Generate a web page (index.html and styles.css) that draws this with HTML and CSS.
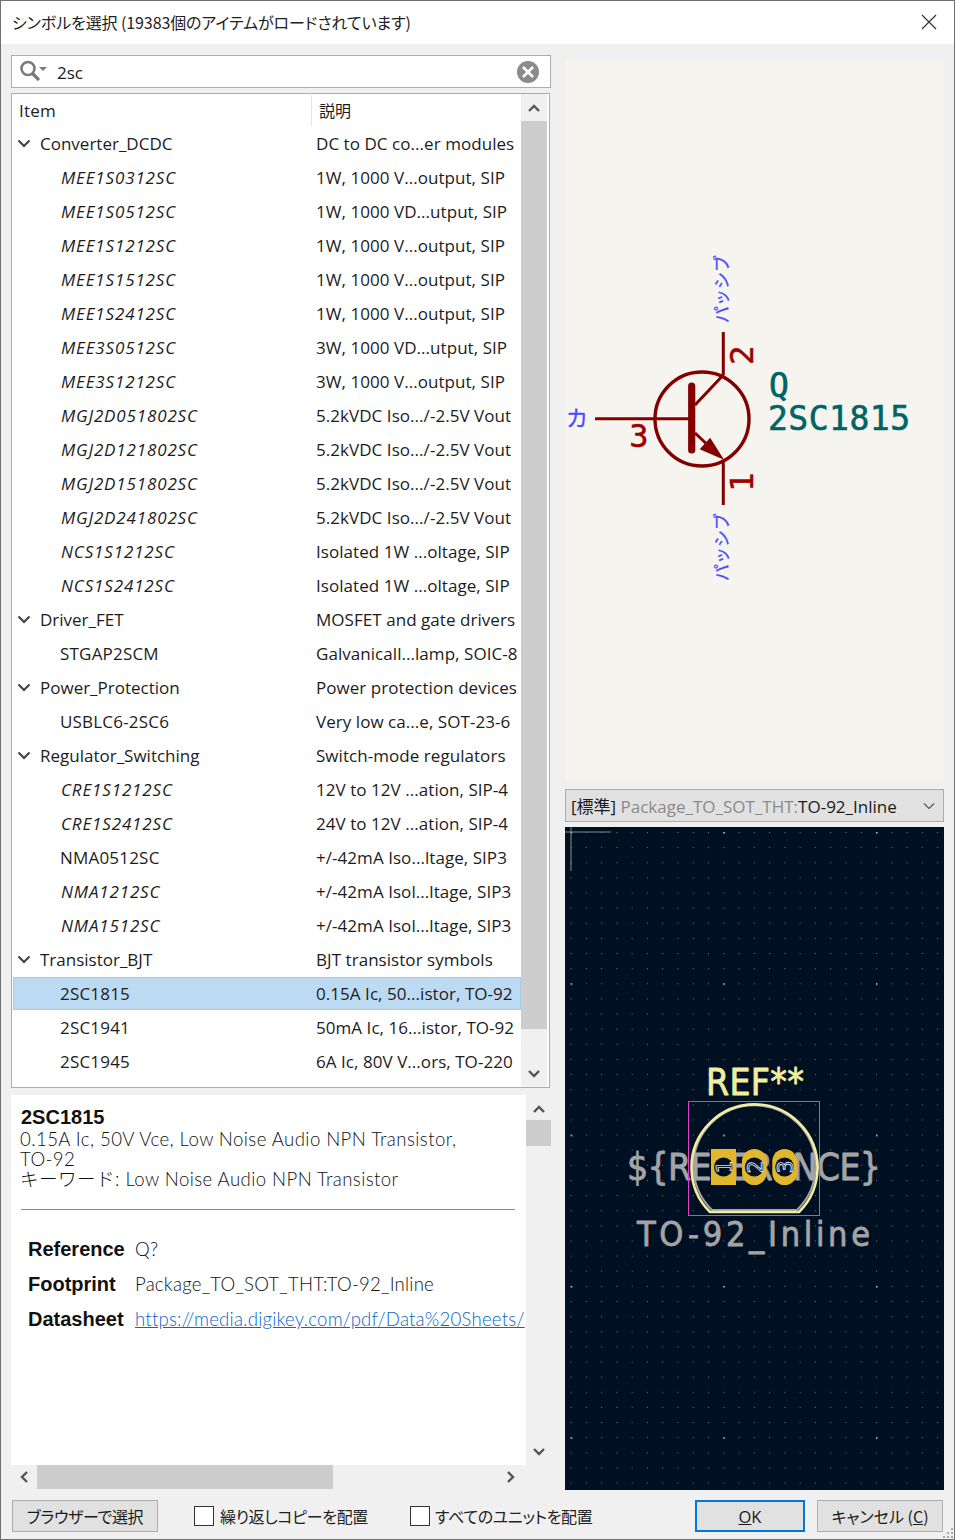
FILE: index.html
```html
<!DOCTYPE html>
<html lang="ja">
<head>
<meta charset="utf-8">
<title>シンボルを選択</title>
<link rel="stylesheet" href="styles.css">
</head>
<body>
<div class="window">
  <header class="titlebar">
    <span class="title">シンボルを選択 (19383個のアイテムがロードされています)</span>
    <svg class="close" width="16" height="16" viewBox="0 0 16 16"><path d="M1 1L15 15M15 1L1 15" stroke="#333" stroke-width="1.2" fill="none"/></svg>
  </header>
  <main class="main">
    <section class="left">
      <div class="search">
        <svg class="search-icon" width="30" height="24" viewBox="0 0 30 24"><circle cx="9" cy="9.5" r="6.5" fill="none" stroke="#7a7a7a" stroke-width="2.6"/><path d="M13.5 14.5L20 21" stroke="#7a7a7a" stroke-width="3.2"/><path d="M20 8h8l-4 4z" fill="#7a7a7a"/></svg>
        <span class="search-text">2sc</span>
        <svg class="clear" width="24" height="24" viewBox="0 0 24 24"><circle cx="12" cy="12" r="11" fill="#8b8b8b"/><path d="M7 7L17 17M17 7L7 17" stroke="#fff" stroke-width="2.6"/></svg>
      </div>
      <div class="tree">
        <div class="tree-body">
          <div class="row head"><span class="c1 headcell">Item</span><span class="c2 headcell">説明</span></div>
          <div class="row group"><svg class="chev" width="14" height="9" viewBox="0 0 14 9"><path d="M1.5 1.5L7 7l5.5-5.5" fill="none" stroke="#444" stroke-width="2.2"/></svg><span class="c1">Converter_DCDC</span><span class="c2">DC to DC co...er modules</span></div>
          <div class="row"><span class="c1 em">MEE1S0312SC</span><span class="c2">1W, 1000 V...output, SIP</span></div>
          <div class="row"><span class="c1 em">MEE1S0512SC</span><span class="c2">1W, 1000 VD...utput, SIP</span></div>
          <div class="row"><span class="c1 em">MEE1S1212SC</span><span class="c2">1W, 1000 V...output, SIP</span></div>
          <div class="row"><span class="c1 em">MEE1S1512SC</span><span class="c2">1W, 1000 V...output, SIP</span></div>
          <div class="row"><span class="c1 em">MEE1S2412SC</span><span class="c2">1W, 1000 V...output, SIP</span></div>
          <div class="row"><span class="c1 em">MEE3S0512SC</span><span class="c2">3W, 1000 VD...utput, SIP</span></div>
          <div class="row"><span class="c1 em">MEE3S1212SC</span><span class="c2">3W, 1000 V...output, SIP</span></div>
          <div class="row"><span class="c1 em">MGJ2D051802SC</span><span class="c2">5.2kVDC Iso.../-2.5V Vout</span></div>
          <div class="row"><span class="c1 em">MGJ2D121802SC</span><span class="c2">5.2kVDC Iso.../-2.5V Vout</span></div>
          <div class="row"><span class="c1 em">MGJ2D151802SC</span><span class="c2">5.2kVDC Iso.../-2.5V Vout</span></div>
          <div class="row"><span class="c1 em">MGJ2D241802SC</span><span class="c2">5.2kVDC Iso.../-2.5V Vout</span></div>
          <div class="row"><span class="c1 em">NCS1S1212SC</span><span class="c2">Isolated 1W ...oltage, SIP</span></div>
          <div class="row"><span class="c1 em">NCS1S2412SC</span><span class="c2">Isolated 1W ...oltage, SIP</span></div>
          <div class="row group"><svg class="chev" width="14" height="9" viewBox="0 0 14 9"><path d="M1.5 1.5L7 7l5.5-5.5" fill="none" stroke="#444" stroke-width="2.2"/></svg><span class="c1">Driver_FET</span><span class="c2">MOSFET and gate drivers</span></div>
          <div class="row"><span class="c1">STGAP2SCM</span><span class="c2">Galvanicall...lamp, SOIC-8</span></div>
          <div class="row group"><svg class="chev" width="14" height="9" viewBox="0 0 14 9"><path d="M1.5 1.5L7 7l5.5-5.5" fill="none" stroke="#444" stroke-width="2.2"/></svg><span class="c1">Power_Protection</span><span class="c2">Power protection devices</span></div>
          <div class="row"><span class="c1">USBLC6-2SC6</span><span class="c2">Very low ca...e, SOT-23-6</span></div>
          <div class="row group"><svg class="chev" width="14" height="9" viewBox="0 0 14 9"><path d="M1.5 1.5L7 7l5.5-5.5" fill="none" stroke="#444" stroke-width="2.2"/></svg><span class="c1">Regulator_Switching</span><span class="c2">Switch-mode regulators</span></div>
          <div class="row"><span class="c1 em">CRE1S1212SC</span><span class="c2">12V to 12V ...ation, SIP-4</span></div>
          <div class="row"><span class="c1 em">CRE1S2412SC</span><span class="c2">24V to 12V ...ation, SIP-4</span></div>
          <div class="row"><span class="c1">NMA0512SC</span><span class="c2">+/-42mA Iso...ltage, SIP3</span></div>
          <div class="row"><span class="c1 em">NMA1212SC</span><span class="c2">+/-42mA Isol...ltage, SIP3</span></div>
          <div class="row"><span class="c1 em">NMA1512SC</span><span class="c2">+/-42mA Isol...ltage, SIP3</span></div>
          <div class="row group"><svg class="chev" width="14" height="9" viewBox="0 0 14 9"><path d="M1.5 1.5L7 7l5.5-5.5" fill="none" stroke="#444" stroke-width="2.2"/></svg><span class="c1">Transistor_BJT</span><span class="c2">BJT transistor symbols</span></div>
          <div class="row selected"><span class="c1">2SC1815</span><span class="c2">0.15A Ic, 50...istor, TO-92</span></div>
          <div class="row"><span class="c1">2SC1941</span><span class="c2">50mA Ic, 16...istor, TO-92</span></div>
          <div class="row"><span class="c1">2SC1945</span><span class="c2">6A Ic, 80V V...ors, TO-220</span></div>
        </div>
        <div class="vbar tree-bar">
          <div class="arrow"><svg width="14" height="10" viewBox="0 0 14 10"><path d="M2 8l5-5 5 5" fill="none" stroke="#555" stroke-width="2.4"/></svg></div>
          <div class="thumb tree-thumb"></div>
          <div class="spacer"></div>
          <div class="arrow"><svg width="14" height="10" viewBox="0 0 14 10"><path d="M2 2l5 5 5-5" fill="none" stroke="#555" stroke-width="2.4"/></svg></div>
        </div>
      </div>
      <div class="info">
        <div class="info-body">
          <div class="info-name">2SC1815</div>
          <div class="info-desc">0.15A Ic, 50V Vce, Low Noise Audio NPN Transistor,<br>TO-92<br>キーワード: Low Noise Audio NPN Transistor</div>
          <hr class="rule">
          <div class="fields">
            <div class="field"><span class="label">Reference</span><span class="value">Q?</span></div>
            <div class="field"><span class="label">Footprint</span><span class="value">Package_TO_SOT_THT:TO-92_Inline</span></div>
            <div class="field"><span class="label">Datasheet</span><a class="value link" href="#">https://media.digikey.com/pdf/Data%20Sheets/</a></div>
          </div>
        </div>
        <div class="vbar info-bar">
          <div class="arrow"><svg width="14" height="10" viewBox="0 0 14 10"><path d="M2 8l5-5 5 5" fill="none" stroke="#555" stroke-width="2.4"/></svg></div>
          <div class="thumb info-thumb"></div>
          <div class="spacer"></div>
          <div class="arrow"><svg width="14" height="10" viewBox="0 0 14 10"><path d="M2 2l5 5 5-5" fill="none" stroke="#555" stroke-width="2.4"/></svg></div>
        </div>
      </div>
      <div class="hbar">
        <div class="harrow"><svg width="10" height="14" viewBox="0 0 10 14"><path d="M8 2L3 7l5 5" fill="none" stroke="#555" stroke-width="2.4"/></svg></div>
        <div class="hthumb"></div>
        <div class="spacer"></div>
        <div class="harrow"><svg width="10" height="14" viewBox="0 0 10 14"><path d="M2 2l5 5-5 5" fill="none" stroke="#555" stroke-width="2.4"/></svg></div>
      </div>
    </section>
    <section class="right">
      <svg class="symbol" width="379" height="720" viewBox="565 60 379 720">
        <g fill="none" stroke="#840000">
          <circle cx="702" cy="419" r="47" stroke-width="3.4"/>
          <path d="M723.3 332V375M723.3 460V505M595 418.7H691.7" stroke-width="3"/>
          <path d="M691.7 386V450" stroke-width="7.2" stroke-linecap="round"/>
          <path d="M695 405L723.3 375M695 433L712 449" stroke-width="3"/>
          <path d="M722 458L710 439L701 449Z" fill="#840000" stroke-width="1.5"/>
        </g>
        <g class="pinnum">
          <text transform="translate(753 355) rotate(-90)" text-anchor="middle">2</text>
          <text transform="translate(753 482) rotate(-90)" text-anchor="middle">1</text>
          <text x="639" y="447" text-anchor="middle">3</text>
        </g>
        <g class="refdes">
          <text x="769" y="397">Q</text>
          <text x="768" y="430" textLength="142">2SC1815</text>
        </g>
        <g class="pintype">
          <text x="577" y="426" text-anchor="middle" class="pt-big">カ</text>
          <text transform="translate(728 289) rotate(-90)" text-anchor="middle">パッシブ</text>
          <text transform="translate(728 547) rotate(-90)" text-anchor="middle">パッシブ</text>
        </g>
      </svg>
      <div class="combo">
        <span><span class="combo-dark">[標準]</span> <span class="combo-gray">Package_TO_SOT_THT:</span><span class="combo-dark">TO-92_Inline</span></span>
        <svg width="12" height="8" viewBox="0 0 12 8"><path d="M1 1.5L6 6.5l5-5" fill="none" stroke="#555" stroke-width="1.2"/></svg>
      </div>
      <svg class="pcb" width="379" height="663" viewBox="565 827 379 663">
        <defs>
          <pattern id="minor" x="570.6" y="832" width="15.27" height="15.13" patternUnits="userSpaceOnUse"><rect width="1" height="1" fill="#6f7883"/></pattern>
          <pattern id="major" x="570.6" y="832" width="152.7" height="151.3" patternUnits="userSpaceOnUse"><rect width="1.6" height="1.6" fill="#b8b8b8"/></pattern>
        </defs>
        <rect x="565" y="827" width="379" height="663" fill="#001023"/>
        <rect x="565" y="827" width="379" height="663" fill="url(#minor)"/>
        <rect x="565" y="827" width="379" height="663" fill="url(#major)"/>
        <path d="M565 832H611M571 827V871" stroke="#8a8a8a" stroke-width="1" fill="none"/>
        <text class="pcbtext gray" x="627" y="1180" textLength="254" font-size="37">${REFERENCE}</text>
        <text class="pcbtext gray" x="637" y="1246" textLength="233" font-size="34">TO-92_Inline</text>
        <text class="pcbtext yellow" x="706" y="1095" textLength="98" font-size="37">REF**</text>
        <path d="M712 1210A61 61 0 1 1 797 1210Z" fill="none" stroke="#a5a5a5" stroke-width="2"/>
        <rect x="688.5" y="1101.5" width="131" height="114" fill="none" stroke="#e040c8" stroke-width="1"/>
        <path d="M710 1212A63 63 0 1 1 799 1212Z" fill="none" stroke="#f2eda1" stroke-width="2.6"/>
        <rect x="711" y="1149" width="25" height="36" fill="#e3b72b"/>
        <rect x="742" y="1149" width="24.7" height="36" rx="12.3" fill="#e3b72b"/>
        <rect x="772.3" y="1149" width="24.7" height="36" rx="12.3" fill="#e3b72b"/>
        <circle cx="723.5" cy="1167" r="9.5" fill="#001023"/>
        <circle cx="754.3" cy="1167" r="9.5" fill="#001023"/>
        <circle cx="784.6" cy="1167" r="9.5" fill="#001023"/>
        <g class="padnum">
          <text transform="translate(732 1167) rotate(-90)" text-anchor="middle">1</text>
          <text transform="translate(763 1167) rotate(-90)" text-anchor="middle">2</text>
          <text transform="translate(793 1167) rotate(-90)" text-anchor="middle">3</text>
        </g>
      </svg>
    </section>
  </main>
  <footer class="footer">
    <button class="btn browse">ブラウザーで選択</button>
    <label class="check first"><span class="box"></span><span>繰り返しコピーを配置</span></label>
    <label class="check second"><span class="box"></span><span>すべてのユニットを配置</span></label>
    <div class="spacer"></div>
    <button class="btn ok"><u>O</u>K</button>
    <button class="btn cancel">キャンセル (<u>C</u>)</button>
  </footer>
  <svg class="grip" width="12" height="12" viewBox="0 0 12 12"><path d="M9 1h2v2H9zM5 5h2v2H5zM9 5h2v2H9zM1 9h2v2H1zM5 9h2v2H5zM9 9h2v2H9z" fill="#a8a8a8"/></svg>
</div>
</body>
</html>
```

FILE: styles.css
```css
* { box-sizing: border-box; }
html, body { margin: 0; padding: 0; }
body { font-family: "Open Sans", "Noto Sans CJK JP", sans-serif; color: #1a1a1a; background: #f0f0f0; }

.window {
  position: relative;
  width: 955px;
  height: 1540px;
  background: #f0f0f0;
  border: 1px solid #6f6f6f;
  display: flex;
  flex-direction: column;
  overflow: hidden;
}

.titlebar {
  height: 43px;
  background: #fff;
  display: flex;
  align-items: center;
  justify-content: space-between;
  padding: 0 17px 0 11px;
  flex: none;
}
.title { font-family: "Noto Sans CJK JP", sans-serif; font-size: 16px; font-feature-settings: "palt"; letter-spacing: -0.1px; color: #222; margin-top: -2px; }
.close { margin-top: -1px; }

.main { display: flex; gap: 14px; padding: 0 10px; flex: none; height: 1445px; }
.left { width: 540px; flex: none; padding-top: 11px; display: flex; flex-direction: column; }
.right { width: 379px; flex: none; padding-top: 16px; display: flex; flex-direction: column; }

.search {
  height: 33px;
  background: #fff;
  border: 1px solid #acacac;
  display: flex;
  align-items: center;
  padding: 0 10px 0 7px;
  flex: none;
}
.search-icon { flex: none; margin-top: -1px; }
.search-text { font-size: 17px; margin-left: 8px; flex: 1; margin-top: 2px; }
.clear { flex: none; }

.tree {
  margin-top: 5px;
  height: 995px;
  width: 539px;
  background: #fff;
  border: 1px solid #acacac;
  display: flex;
  padding-left: 1px;
  flex: none;
}
.tree-body { width: 508px; flex: none; overflow: hidden; }
.row {
  position: relative;
  height: 34px;
  display: flex;
  align-items: center;
  padding-bottom: 2px;
  font-size: 17px;
  white-space: nowrap;
  color: #1c1c1c;
}
.row.head { height: 33px; padding-bottom: 0; }
.selected.row { padding-bottom: 1px; }
.c1 { width: 303px; padding-left: 47px; flex: none; overflow: hidden; letter-spacing: 0.2px; }
.c2 { flex: none; white-space: nowrap; letter-spacing: 0.05px; }
.em { font-style: italic; letter-spacing: 0.85px; padding-left: 48px; }
.group .c1 { padding-left: 13px; width: 289px; margin-left: 14px; letter-spacing: 0; }
.chev { position: absolute; left: 4px; top: 12px; }
.headcell { height: 31px; display: flex; align-items: center; }
.head .c1 { padding-left: 6px; width: 299px; border-right: 1px solid #e4e4e4; }
.head .c2 { padding-left: 7px; font-family: "Noto Sans CJK JP", sans-serif; font-size: 16px; padding-bottom: 2px; }
.selected { background: #bcdaf2; border: 1px solid #a6cbe9; height: 33px; margin-bottom: 1px; }
.selected .c1 { padding-left: 46px; width: 302px; }

.vbar { display: flex; flex-direction: column; align-items: stretch; flex: none; background: #f0f0f0; }
.tree-bar { width: 26px; }
.info-bar { width: 25px; }
.arrow { height: 27px; display: flex; align-items: center; justify-content: center; flex: none; }
.thumb { background: #cdcdcd; flex: none; }
.tree-thumb { height: 908px; }
.info-thumb { height: 26px; }
.info-bar .thumb { margin-top: -2px; }
.spacer { flex: 1; }

.info { margin-top: 7px; display: flex; height: 370px; flex: none; }
.info-body { width: 515px; flex: none; background: #fff; padding: 11px 0 0 10px; overflow: hidden; }
.info-name { font-family: "Liberation Sans", sans-serif; font-weight: 700; font-size: 20px; line-height: 22px; color: #111; }
.info-desc { font-family: "Lato", "Noto Sans CJK JP", sans-serif; font-weight: 300; font-size: 18.6px; letter-spacing: 0.42px; line-height: 20px; color: #111; margin-top: 1px; margin-left: -1px; }
.rule { width: 494px; height: 1px; border: 0; background: #8a8a8a; margin: 20px 0 0; }
.fields { padding: 22px 0 0 7px; display: flex; flex-direction: column; }
.field { display: flex; align-items: center; height: 35px; white-space: nowrap; }
.label { font-family: "Liberation Sans", sans-serif; font-weight: 700; font-size: 20px; width: 107px; flex: none; color: #111; }
.value { font-family: "Lato", "Noto Sans CJK JP", sans-serif; font-weight: 300; font-size: 18.6px; letter-spacing: 0.22px; color: #111; margin-top: -2px; }
.link { color: #0a66c8; text-decoration: underline; }

.hbar { display: flex; height: 24px; width: 513px; flex: none; }
.harrow { width: 26px; display: flex; align-items: center; justify-content: center; flex: none; }
.hthumb { width: 296px; background: #cdcdcd; flex: none; }

.symbol { display: block; flex: none; background: #f5f4ef; }
.pinnum text { font-family: "DejaVu Sans Mono", monospace; font-size: 32px; fill: #a00000; stroke: #a00000; stroke-width: 0.5px; }
.refdes text { font-family: "DejaVu Sans Mono", monospace; font-size: 33px; fill: #006464; stroke: #006464; stroke-width: 0.6px; }
.pintype text { font-family: "Noto Sans CJK JP", sans-serif; font-size: 17px; fill: #4a4aff; stroke: #4a4aff; stroke-width: 0.3px; }
.pintype .pt-big { font-size: 22px; }

.combo {
  margin-top: 9px;
  height: 33px;
  background: #e1e1e1;
  border: 1px solid #adadad;
  display: flex;
  align-items: center;
  justify-content: space-between;
  padding: 0 8px 0 5px;
  font-size: 17px;
  flex: none;
}
.combo-dark { color: #1a1a1a; font-family: "Open Sans", "Noto Sans CJK JP", sans-serif; }
.combo-gray { color: #8a8a8a; }
.pcb { display: block; margin-top: 5px; flex: none; }
.pcbtext { font-family: "DejaVu Sans", sans-serif; font-stretch: condensed; stroke-linejoin: round; }
.gray { fill: #a4a4a6; stroke: #a4a4a6; stroke-width: 0.8px; }
.yellow { fill: #f2eda1; stroke: #f2eda1; stroke-width: 0.8px; }
.padnum text { font-family: "DejaVu Sans", sans-serif; font-stretch: condensed; font-size: 22px; fill: #001023; stroke: #dfe3ea; stroke-width: 0.9px; }

.footer { display: flex; align-items: flex-start; padding: 11px 11px 0 11px; flex: none; height: 49px; }
.btn {
  height: 32px;
  background: #e1e1e1;
  border: 1px solid #adadad;
  font-family: "Noto Sans CJK JP", "Open Sans", sans-serif;
  font-feature-settings: "palt";
  font-size: 16px;
  color: #1a1a1a;
  padding: 0;
  flex: none;
}
.browse { width: 146px; letter-spacing: -0.35px; }
.ok { width: 110px; border: 2px solid #0078d7; font-family: "Open Sans", sans-serif; font-size: 16.5px; }
.cancel { width: 126px; margin-left: 12px; }
.check { display: flex; align-items: center; height: 32px; font-family: "Noto Sans CJK JP", sans-serif; font-feature-settings: "palt"; font-size: 16px; letter-spacing: -0.35px; color: #222; gap: 6px; }
.first { margin-left: 36px; }
.second { margin-left: 42px; gap: 5px; }
.box { width: 20px; height: 20px; background: #fff; border: 1px solid #333; flex: none; }
.grip { position: absolute; right: 0; bottom: 0; }
```
